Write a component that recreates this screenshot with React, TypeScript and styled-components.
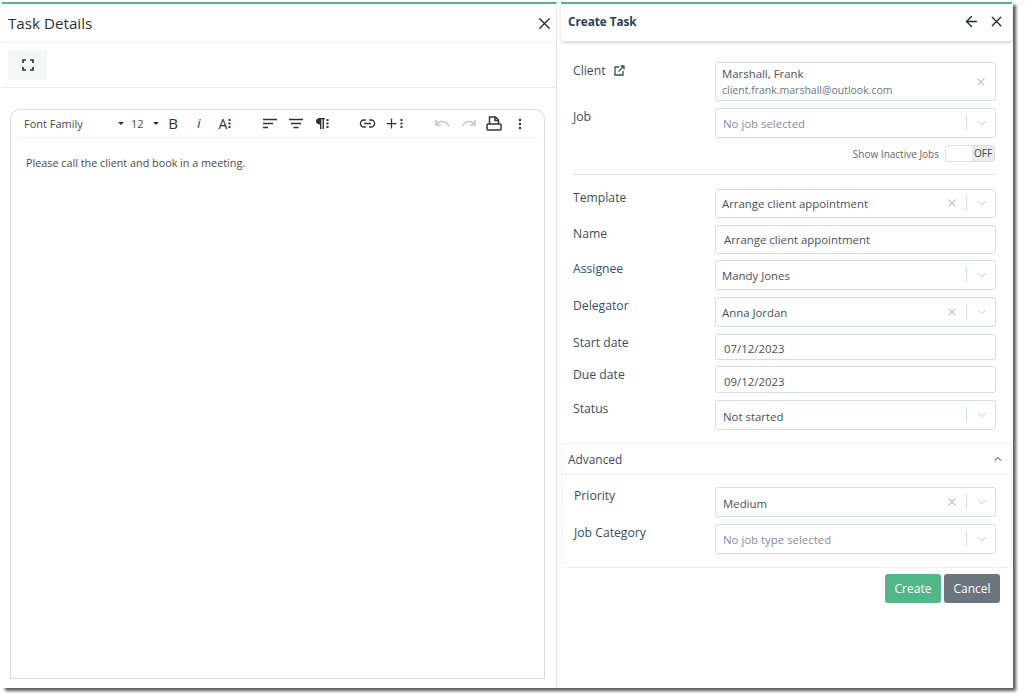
import React from "react";
import styled, { createGlobalStyle } from "styled-components";
import { ArrowLeft, ChevronDown, ChevronUp, EllipsisVertical, Link2, Plus, X } from "lucide-react";

const GlobalStyle = createGlobalStyle`
  html, body {
    margin: 0;
    padding: 0;
    background: #fff;
  }
  body {
    font-family: "Open Sans", "Liberation Sans", sans-serif;
    color: #495057;
  }
`;

const Page = styled.div`
  width: 1025px;
  height: 700px;
  padding: 2px 0 0 2px;
  box-sizing: border-box;
  overflow: hidden;
`;

const Frame = styled.div`
  width: 1011px;
  height: 686px;
  display: flex;
  background: #fff;
  box-shadow: 3px 3px 3px rgba(0, 0, 0, 0.65);
`;

const LeftPanel = styled.section`
  width: 555px;
  display: flex;
  flex-direction: column;
  box-sizing: border-box;
  border-top: 2px solid #4fb685;
  border-right: 1px solid #e4e6e8;
`;

const LeftHeader = styled.header`
  height: 38px;
  display: flex;
  align-items: center;
  justify-content: space-between;
  padding: 0 1px 0 6px;
  border-bottom: 1px solid #f0f1f2;
`;

const LeftTitle = styled.h1`
  margin: 0;
  font-size: 15.2px;
  font-weight: 500;
  color: #2b2f33;
`;

const IconButton = styled.button`
  width: 22px;
  height: 22px;
  padding: 0;
  display: flex;
  align-items: center;
  justify-content: center;
  border: 0;
  background: none;
  color: #212529;
`;

const ActionBar = styled.div`
  height: 44px;
  display: flex;
  align-items: center;
  padding: 0 6px;
  border-bottom: 1px solid #e9eaeb;
`;

const FullscreenButton = styled.button`
  width: 39px;
  height: 30px;
  padding: 0;
  display: flex;
  align-items: center;
  justify-content: center;
  border: 0;
  border-radius: 3px;
  background: #f5f6f6;
  color: #333;
`;

const Editor = styled.div`
  flex: 1;
  margin: 21px 11px 9px 8px;
  box-sizing: border-box;
  border: 1px solid #d9dbdd;
  border-radius: 10px 10px 0 0;
  display: flex;
  flex-direction: column;
`;

const EditorToolbar = styled.div`
  height: 27px;
  margin: 0 7px;
  display: flex;
  align-items: center;
  border-bottom: 1px solid #f0f1f2;
  color: #333;
`;

const FontSelect = styled.div<{ $w: number }>`
  width: ${(p) => p.$w}px;
  display: flex;
  align-items: center;
  justify-content: space-between;
  padding: 0 0 0 6px;
  box-sizing: border-box;
  font-size: 11px;
  color: #4a4a4a;
`;

const Caret = styled.span`
  width: 0;
  height: 0;
  margin-right: 1px;
  border-left: 3.5px solid transparent;
  border-right: 3.5px solid transparent;
  border-top: 3.5px solid #333;
`;

const ToolGroup = styled.div<{ $gap: number }>`
  display: flex;
  margin-left: ${(p) => p.$gap}px;
`;

const Tool = styled.span<{ $off?: boolean }>`
  width: 26px;
  height: 24px;
  display: flex;
  align-items: center;
  justify-content: center;
  color: ${(p) => (p.$off ? "#c4c6c8" : "#333")};
`;

const BoldGlyph = styled.span`
  font-size: 15px;
  font-weight: 500;
  line-height: 1;
`;

const ItalicGlyph = styled.span`
  font-size: 13px;
  font-style: italic;
  font-weight: 500;
  line-height: 1;
`;

const FontGlyph = styled.span`
  font-size: 14px;
  line-height: 1;
`;

const EditorText = styled.p`
  margin: 17px 0 0 15px;
  font-size: 10.8px;
  line-height: 16px;
  color: #4a4a4a;
`;

const RightPanel = styled.section`
  width: 451px;
  margin-left: 4px;
  display: flex;
  flex-direction: column;
  border-top: 2px solid #4fb685;
`;

const RightHeader = styled.header`
  height: 37px;
  flex: none;
  display: flex;
  align-items: center;
  justify-content: space-between;
  padding: 0 5px 2px 7px;
  box-sizing: border-box;
  border-radius: 0 0 3px 3px;
  box-shadow: 0 2px 3px rgba(0, 0, 0, 0.16);
`;

const RightTitle = styled.h2`
  margin: 0 0 2px;
  font-size: 11.7px;
  font-weight: 700;
  color: #2c3e50;
`;

const HeaderActions = styled.div`
  display: flex;
  align-items: center;
  gap: 4px;
`;

const BackButton = styled(IconButton)`
  margin-right: -1px;
`;

const Form = styled.div`
  padding: 21px 16px 0 12px;
`;

const Row = styled.div<{ $mb?: number; $label?: number }>`
  display: grid;
  grid-template-columns: ${(p) => p.$label ?? 142}px 281px;
  align-items: start;
  margin-bottom: ${(p) => p.$mb ?? 0}px;
`;

const Label = styled.label`
  display: flex;
  align-items: center;
  gap: 8px;
  font-size: 12.2px;
  font-weight: 500;
  line-height: 17px;
  color: #3e4c5e;
`;

const Field = styled.div<{ $h: number; $inset?: number; $low?: boolean }>`
  height: ${(p) => p.$h}px;
  box-sizing: border-box;
  display: flex;
  align-items: center;
  padding: ${(p) => (p.$low ? "3px" : "0")} 0 0 ${(p) => p.$inset ?? 6}px;
  border: 1px solid #d8dbde;
  border-radius: 3px;
  font-size: 11.4px;
  color: #495057;
  background: #fff;
`;

const ClientField = styled(Field)`
  padding-top: 1px;
  padding-right: 8px;
`;

const ClientInfo = styled.div`
  flex: 1;
  display: flex;
  flex-direction: column;
  line-height: 17px;
`;

const ClientMail = styled.span`
  font-size: 10.5px;
  color: #6c757d;
`;

const Value = styled.span<{ $muted?: boolean }>`
  flex: 1;
  color: ${(p) => (p.$muted ? "#868e96" : "#495057")};
`;

const Controls = styled.div<{ $low?: boolean }>`
  display: flex;
  align-items: center;
  margin-top: ${(p) => (p.$low ? "-4px" : "-1px")};
  color: #c2c5c8;
`;

const Separator = styled.span`
  width: 1px;
  height: 15px;
  margin: 0 8px;
  background: #d3d6d8;
`;

const ChevronSlot = styled.span`
  display: flex;
  margin-right: 6px;
`;

const ToggleRow = styled.div`
  display: flex;
  justify-content: flex-end;
  align-items: center;
  gap: 6px;
  margin-top: 7px;
  padding-right: 1px;
  padding-left: 142px;
  width: 423px;
  box-sizing: border-box;
  font-size: 10px;
  color: #5c6670;
`;

const Toggle = styled.div`
  width: 50px;
  height: 17px;
  box-sizing: border-box;
  display: flex;
  justify-content: flex-end;
  border: 1px solid #dcdfe1;
  border-radius: 3px;
  overflow: hidden;
`;

const ToggleState = styled.span`
  width: 22px;
  background: #eaebec;
  font-size: 10px;
  line-height: 15px;
  text-align: center;
  color: #444;
`;

const Divider = styled.hr`
  margin: 12px 0 14px;
  border: 0;
  border-top: 1px solid #e3e5e7;
`;

const AdvancedCard = styled.div`
  margin-top: 13px;
  border: 1px solid #f2f3f4;
  border-radius: 3px;
`;

const AdvancedHeader = styled.div`
  height: 30px;
  display: flex;
  align-items: center;
  justify-content: space-between;
  padding: 0 7px 0 6px;
  border-bottom: 1px solid #f2f3f4;
  font-size: 11.9px;
  font-weight: 500;
  color: #3e4c5e;
`;

const AdvancedBody = styled.div`
  padding: 12px 16px 13px 12px;
`;

const Footer = styled.div`
  display: flex;
  justify-content: flex-end;
  gap: 3px;
  margin-top: 6px;
  padding-right: 12px;
`;

const Action = styled.button<{ $bg: string }>`
  height: 29px;
  width: 56px;
  padding: 0;
  border: 0;
  border-radius: 3px;
  font-family: inherit;
  font-size: 12px;
  color: #fff;
  background: ${(p) => p.$bg};
`;

function Dots() {
  return (
    <svg width="3" height="11" viewBox="0 0 3 11" fill="currentColor" style={{ marginLeft: 1 }}>
      <rect x="0.5" y="1" width="2" height="2" />
      <rect x="0.5" y="4.5" width="2" height="2" />
      <rect x="0.5" y="8" width="2" height="2" />
    </svg>
  );
}

function FullscreenIcon() {
  return (
    <svg width="12" height="12" viewBox="0 0 12 12" fill="none" stroke="currentColor" strokeWidth="1.7">
      <path d="M1 4V1h3M8 1h3v3M11 8v3H8M4 11H1V8" />
    </svg>
  );
}

function AlignLeftIcon() {
  return (
    <svg width="14" height="11" viewBox="0 0 14 11" stroke="currentColor" strokeWidth="1.5">
      <path d="M0 1.5h14M0 5.5h10M0 9.5h5" />
    </svg>
  );
}

function AlignCenterIcon() {
  return (
    <svg width="14" height="11" viewBox="0 0 14 11" stroke="currentColor" strokeWidth="1.5">
      <path d="M0 1.5h14M2 5.5h10M4.5 9.5h5" />
    </svg>
  );
}

function ParagraphIcon() {
  return (
    <svg width="9" height="11" viewBox="0 0 9 11" fill="currentColor">
      <path d="M3.5 0H9v1.3H8V11H6.6V1.3H5.4V11H4V6.5h-.5C1.5 6.5 0 5 0 3.2S1.5 0 3.5 0z" />
    </svg>
  );
}

function UndoIcon() {
  return (
    <svg width="15" height="9" viewBox="0 0 15 9" fill="none" stroke="currentColor" strokeWidth="1.5">
      <path d="M1 1v5h5" />
      <path d="M1.5 5.5C4.5 1.5 10.5 1 14 7.5" />
    </svg>
  );
}

function RedoIcon() {
  return (
    <svg width="15" height="9" viewBox="0 0 15 9" fill="none" stroke="currentColor" strokeWidth="1.5">
      <path d="M14 1v5H9" />
      <path d="M13.5 5.5C10.5 1.5 4.5 1 1 7.5" />
    </svg>
  );
}

function PrintIcon() {
  return (
    <svg width="16" height="15" viewBox="0 0 16 15" fill="none" stroke="currentColor" strokeWidth="1.5">
      <path d="M3.5 8V1h6l3 3v4" />
      <path d="M9 1v3.5h3.5" />
      <rect x="1" y="8" width="14" height="6" rx="1" />
    </svg>
  );
}

function OpenLinkIcon() {
  return (
    <svg width="11" height="11" viewBox="0 0 11 11" fill="none" stroke="#3e4c5e" strokeWidth="1.3">
      <path d="M5 2H1v8h8V6" />
      <path d="M4.5 6.5 10 1M6.5 1H10v3.5" />
    </svg>
  );
}

interface SelectProps {
  value: string;
  height?: number;
  inset?: number;
  low?: boolean;
  muted?: boolean;
  clearable?: boolean;
}

function Select({ value, height = 30, inset, low, muted, clearable }: SelectProps) {
  return (
    <Field $h={height} $inset={inset} $low={low}>
      <Value $muted={muted}>{value}</Value>
      <Controls $low={low}>
        {clearable && <X size={12} strokeWidth={2.4} />}
        <Separator />
        <ChevronSlot>
          <ChevronDown size={14} strokeWidth={1.6} />
        </ChevronSlot>
      </Controls>
    </Field>
  );
}

export default function App() {
  return (
    <Page>
      <GlobalStyle />
      <Frame>
        <LeftPanel>
          <LeftHeader>
            <LeftTitle>Task Details</LeftTitle>
            <IconButton>
              <X size={19} strokeWidth={1.6} />
            </IconButton>
          </LeftHeader>
          <ActionBar>
            <FullscreenButton>
              <FullscreenIcon />
            </FullscreenButton>
          </ActionBar>
          <Editor>
            <EditorToolbar>
              <FontSelect $w={107}>
                Font Family
                <Caret />
              </FontSelect>
              <FontSelect $w={35}>
                12
                <Caret />
              </FontSelect>
              <ToolGroup $gap={0}>
                <Tool>
                  <BoldGlyph>B</BoldGlyph>
                </Tool>
                <Tool>
                  <ItalicGlyph>i</ItalicGlyph>
                </Tool>
                <Tool>
                  <FontGlyph>A</FontGlyph>
                  <Dots />
                </Tool>
              </ToolGroup>
              <ToolGroup $gap={19}>
                <Tool>
                  <AlignLeftIcon />
                </Tool>
                <Tool>
                  <AlignCenterIcon />
                </Tool>
                <Tool>
                  <ParagraphIcon />
                  <Dots />
                </Tool>
              </ToolGroup>
              <ToolGroup $gap={19}>
                <Tool>
                  <Link2 size={17} strokeWidth={2} />
                </Tool>
                <Tool>
                  <Plus size={15} strokeWidth={2} />
                  <Dots />
                </Tool>
              </ToolGroup>
              <ToolGroup $gap={23}>
                <Tool $off>
                  <UndoIcon />
                </Tool>
                <Tool $off>
                  <RedoIcon />
                </Tool>
                <Tool>
                  <PrintIcon />
                </Tool>
                <Tool>
                  <EllipsisVertical size={14} strokeWidth={2.2} />
                </Tool>
              </ToolGroup>
            </EditorToolbar>
            <EditorText>Please call the client and book in a meeting.</EditorText>
          </Editor>
        </LeftPanel>

        <RightPanel>
          <RightHeader>
            <RightTitle>Create Task</RightTitle>
            <HeaderActions>
              <BackButton>
                <ArrowLeft size={17} strokeWidth={1.8} />
              </BackButton>
              <IconButton>
                <X size={17} strokeWidth={1.8} />
              </IconButton>
            </HeaderActions>
          </RightHeader>

          <Form>
            <Row $mb={7}>
              <Label>
                Client <OpenLinkIcon />
              </Label>
              <ClientField $h={39}>
                <ClientInfo>
                  <span>Marshall, Frank</span>
                  <ClientMail>client.frank.marshall@outlook.com</ClientMail>
                </ClientInfo>
                <Controls>
                  <X size={12} strokeWidth={2.4} />
                </Controls>
              </ClientField>
            </Row>
            <Row>
              <Label>Job</Label>
              <Select value="No job selected" inset={7} muted />
            </Row>
            <ToggleRow>
              Show Inactive Jobs
              <Toggle>
                <ToggleState>OFF</ToggleState>
              </Toggle>
            </ToggleRow>
            <Divider />
            <Row $mb={7}>
              <Label>Template</Label>
              <Select value="Arrange client appointment" height={29} clearable />
            </Row>
            <Row $mb={6}>
              <Label>Name</Label>
              <Field $h={29} $inset={8}>
                Arrange client appointment
              </Field>
            </Row>
            <Row $mb={7}>
              <Label>Assignee</Label>
              <Select value="Mandy Jones" />
            </Row>
            <Row $mb={7}>
              <Label>Delegator</Label>
              <Select value="Anna Jordan" clearable />
            </Row>
            <Row $mb={6}>
              <Label>Start date</Label>
              <Field $h={26} $inset={8} $low>
                07/12/2023
              </Field>
            </Row>
            <Row $mb={7}>
              <Label>Due date</Label>
              <Field $h={27} $inset={8} $low>
                09/12/2023
              </Field>
            </Row>
            <Row>
              <Label>Status</Label>
              <Select value="Not started" inset={7} low />
            </Row>
          </Form>

          <AdvancedCard>
            <AdvancedHeader>
              Advanced
              <ChevronUp size={12} strokeWidth={2} color="#333" />
            </AdvancedHeader>
            <AdvancedBody>
              <Row $mb={7} $label={141}>
                <Label>Priority</Label>
                <Select value="Medium" inset={7} low clearable />
              </Row>
              <Row $label={141}>
                <Label>Job Category</Label>
                <Select value="No job type selected" inset={7} muted />
              </Row>
            </AdvancedBody>
          </AdvancedCard>

          <Footer>
            <Action $bg="#52b788">Create</Action>
            <Action $bg="#6c757d">Cancel</Action>
          </Footer>
        </RightPanel>
      </Frame>
    </Page>
  );
}
